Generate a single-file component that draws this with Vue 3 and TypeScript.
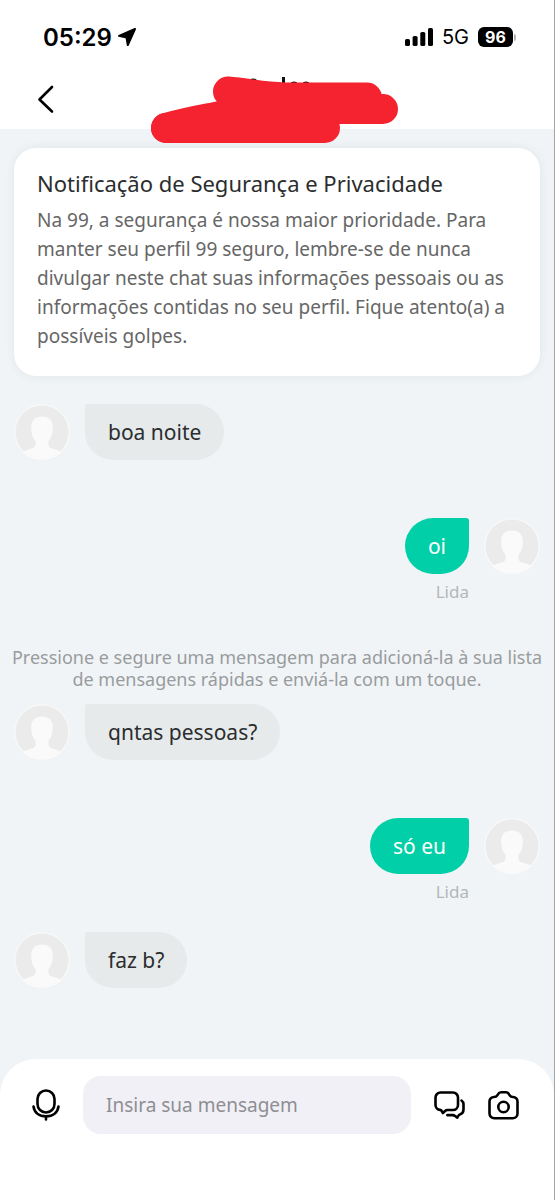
<script setup lang="ts">
import { ref } from 'vue'

interface ChatItem {
  id: number
  kind: 'received' | 'sent' | 'hint'
  text: string
  status?: string
}

const draft = ref('')

const items: ChatItem[] = [
  { id: 1, kind: 'received', text: 'boa noite' },
  { id: 2, kind: 'sent', text: 'oi', status: 'Lida' },
  {
    id: 3,
    kind: 'hint',
    text: 'Pressione e segure uma mensagem para adicioná-la à sua lista\nde mensagens rápidas e enviá-la com um toque.',
  },
  { id: 4, kind: 'received', text: 'qntas pessoas?' },
  { id: 5, kind: 'sent', text: 'só eu', status: 'Lida' },
  { id: 6, kind: 'received', text: 'faz b?' },
]

const notice =
  'Na 99, a segurança é nossa maior prioridade. Para\nmanter seu perfil 99 seguro, lembre-se de nunca\ndivulgar neste chat suas informações pessoais ou as\ninformações contidas no seu perfil. Fique atento(a) a\npossíveis golpes.'
</script>

<template>
  <div class="app">
    <header class="top">
      <div class="status-bar">
        <div class="clock">
          <span>05:29</span>
          <svg width="20" height="20" viewBox="0 0 20 20" aria-hidden="true">
            <path d="M18 2 2 8.800 9.500 10.500 10.800 18z" fill="#000" stroke="#000" stroke-width="2" stroke-linejoin="round" />
          </svg>
        </div>
        <div class="signals">
          <svg width="28" height="18" viewBox="0 0 28 18" aria-hidden="true">
            <rect x="0" y="11" width="5" height="7" rx="1.600" />
            <rect x="7.600" y="8" width="5" height="10" rx="1.600" />
            <rect x="15.300" y="4" width="5" height="14" rx="1.600" />
            <rect x="23" y="0" width="5" height="18" rx="1.600" />
          </svg>
          <span class="network">5G</span>
          <span class="battery">96</span>
          <span class="battery-cap"></span>
        </div>
      </div>
      <nav class="nav">
        <button class="icon-button" type="button" aria-label="Voltar">
          <svg width="18" height="30" viewBox="0 0 18 30" fill="none" stroke="#000" stroke-width="2.600" stroke-linecap="round" stroke-linejoin="round">
            <path d="M15 3 2.500 15.500 15 27.500" />
          </svg>
        </button>
      </nav>
      <svg class="scribble" width="248" height="68" viewBox="0 0 248 68" aria-hidden="true">
        <g fill="#111">
          <ellipse cx="103" cy="6.500" rx="4" ry="3" />
          <rect x="132" y="2" width="3" height="8" />
          <ellipse cx="144" cy="8" rx="3" ry="1.500" />
          <ellipse cx="156" cy="8" rx="3" ry="1.500" />
        </g>
        <g fill="none" stroke="#f5232f" stroke-width="30" stroke-linecap="round" stroke-linejoin="round">
          <path d="M78 16.500 C98 18 110 22 135 22.500 H217" />
          <path d="M233 34 H130 C100 34 75 40 60 43 C44 46 30 49 16 53" />
          <path d="M16 53 H175" />
          <path d="M80 40 H180" stroke-width="20" />
        </g>
      </svg>
    </header>

    <main class="chat">
      <section class="card">
        <h1>Notificação de Segurança e Privacidade</h1>
        <p>{{ notice }}</p>
      </section>

      <div class="list">
        <template v-for="item in items" :key="item.id">
          <p v-if="item.kind === 'hint'" class="hint">{{ item.text }}</p>
          <div v-else class="row" :class="item.kind">
            <svg class="avatar" width="56" height="56" viewBox="0 0 56 56" aria-hidden="true">
              <circle cx="28" cy="28" r="28" fill="#f7f8f8" />
              <circle cx="28" cy="28" r="26.500" fill="#ebebeb" />
              <path d="M28 12.500c-6.800 0-10.800 4-10.800 10.500 0 6.500 1.500 11 4.300 13.800v4.200c0 2.500-3 3.300-7 4.400-2.400.7-4.600 1.600-6 2.800A26.500 26.500 0 0 0 28 55.500a26.500 26.500 0 0 0 19.500-7.300c-1.400-1.200-3.600-2.100-6-2.800-4-1.100-7-1.900-7-4.400v-4.200c2.800-2.800 4.300-7.300 4.300-13.800 0-6.500-4-10.500-10.800-10.500z" fill="#fafafa" />
            </svg>
            <div class="message">
              <p class="bubble">{{ item.text }}</p>
              <span v-if="item.status" class="read">{{ item.status }}</span>
            </div>
          </div>
        </template>
      </div>
    </main>

    <footer class="composer">
      <button class="icon-button" type="button" aria-label="Gravar áudio">
        <svg width="28" height="32" viewBox="0 0 28 32" fill="none" stroke="#000" stroke-width="2.600" stroke-linecap="round">
          <rect x="5.500" y="1.500" width="17" height="22" rx="8.500" />
          <path d="M1.500 17.500c.8 6 5.700 9.800 12.500 9.800s11.700-3.800 12.500-9.800M14 28v2.500" />
        </svg>
      </button>
      <input v-model="draft" type="text" placeholder="Insira sua mensagem" aria-label="Insira sua mensagem" />
      <div class="actions">
        <button class="icon-button" type="button" aria-label="Mensagens rápidas">
          <svg width="31" height="30" viewBox="0 0 31 30" fill="none" stroke="#000" stroke-width="2.600" stroke-linecap="round" stroke-linejoin="round">
            <path d="M6.500 2.500h12.500a5 5 0 0 1 5 5v7.500a5 5 0 0 1-5 5h-5.500c-1 0-1.700.3-2.400 1l-2.200 2-1.300-2.200c-.4-.6-.8-.8-1.600-.9a5 5 0 0 1-4.500-4.900V7.500a5 5 0 0 1 5-5z" />
            <path d="M27.500 10.500c1.300.9 2 2 2 3.800v5.200c0 2.600-1.400 4.300-3.600 4.900-.8.200-1.100.5-1.400 1.100l-1.200 2.200-2.200-1.700c-.8-.6-1.400-.9-2.400-.9h-5.400" />
          </svg>
        </button>
        <button class="icon-button" type="button" aria-label="Câmera">
          <svg width="31" height="30" viewBox="0 0 31 30" fill="none" stroke="#000" stroke-width="2.600" stroke-linejoin="round">
            <path d="M6 7c1.700 0 2.600-.5 3.300-1.700l.6-1C10.800 2.700 11.800 2.200 13.200 2.200h4.600c1.400 0 2.400.5 3.300 2.100l.6 1C22.400 6.500 23.300 7 25 7a4.500 4.500 0 0 1 4.500 4.800V23.500a4.800 4.800 0 0 1-4.800 4.800H6.300a4.800 4.800 0 0 1-4.800-4.800V11.800A4.500 4.500 0 0 1 6 7z" />
            <circle cx="15.500" cy="17" r="5.200" />
          </svg>
        </button>
      </div>
    </footer>
  </div>
</template>

<style>
body {
  margin: 0;
  background: #fff;
}
</style>

<style scoped>
.app {
  box-sizing: border-box;
  min-height: 100vh;
  display: flex;
  flex-direction: column;
  border-right: 1px solid #a3a5a6;
  background: #f0f4f6;
  font-family: 'Noto Sans', 'Open Sans', sans-serif;
  color: #2b2d2e;
}

h1,
p {
  margin: 0;
  font-weight: 400;
}

.top {
  position: relative;
  background: #fff;
}

.status-bar {
  display: flex;
  align-items: center;
  justify-content: space-between;
  height: 74px;
  padding: 0 38px 0 43px;
  font-family: Inter, sans-serif;
  color: #000;
}

.clock {
  display: flex;
  align-items: center;
  gap: 5px;
  font-size: 24px;
  font-weight: 600;
}

.signals {
  display: flex;
  align-items: center;
}

.network {
  margin: 0 9px;
  font-size: 20px;
}

.battery {
  width: 35px;
  border-radius: 6px;
  background: #000;
  color: #fff;
  font-size: 16px;
  font-weight: 700;
  line-height: 20px;
  text-align: center;
}

.battery-cap {
  width: 2px;
  height: 7px;
  margin-left: 1px;
  border-radius: 0 2px 2px 0;
  background: #b5b5b5;
}

.nav {
  display: flex;
  height: 55px;
  padding: 0 37px;
  align-items: flex-start;
}

.nav .icon-button {
  padding-top: 10px;
}

.icon-button {
  display: flex;
  padding: 0;
  border: 0;
  background: none;
  cursor: pointer;
}

.scribble {
  position: absolute;
  left: 50%;
  top: 75px;
  margin-left: -127px;
  z-index: 1;
}

.chat {
  flex: 1;
  padding: 19px 14px 0;
}

.card {
  padding: 21px 23px 25px;
  border-radius: 22px;
  background: #fff;
  box-shadow: 0 0 10px rgba(40, 60, 70, 0.08);
}

.card h1 {
  font-size: 22px;
  line-height: 28px;
}

.card p {
  margin-top: 9px;
  color: #666;
  font-size: 19px;
  line-height: 29px;
  white-space: pre-line;
}

.list {
  display: flex;
  flex-direction: column;
  gap: 14px;
  padding-top: 28px;
}

.row {
  display: flex;
  align-items: flex-start;
  gap: 15px;
  min-height: 100px;
}

.sent {
  flex-direction: row-reverse;
}

.message {
  display: flex;
  flex-direction: column;
  align-items: flex-end;
}

.bubble {
  padding: 0 23px;
  border-radius: 3px 28px 28px 28px;
  background: #e6eaeb;
  font-size: 21px;
  line-height: 56px;
}

.sent .bubble {
  border-radius: 28px 3px 28px 28px;
  background: #01cfa7;
  color: #fff;
}

.read {
  margin-top: 6px;
  color: #b4b7b8;
  font-size: 17px;
  line-height: 24px;
}

.hint {
  margin: 14px -8px 0;
  color: #999c9e;
  font-size: 18px;
  line-height: 22px;
  text-align: center;
  white-space: pre-line;
}

.composer {
  box-sizing: border-box;
  display: flex;
  align-items: flex-start;
  gap: 23px;
  min-height: 141px;
  padding: 17px 35px 0 32px;
  border-radius: 36px 36px 0 0;
  background: #fff;
}

.composer .icon-button {
  height: 58px;
  align-items: center;
}

.composer input {
  box-sizing: border-box;
  flex: 1;
  min-width: 0;
  height: 58px;
  padding: 0 23px;
  border: 0;
  border-radius: 18px;
  outline: none;
  background: #f1f0f6;
  color: #2b2d2e;
  font: inherit;
  font-size: 19px;
}

.composer input::placeholder {
  color: #8e8e93;
  opacity: 1;
}

.actions {
  display: flex;
  gap: 23px;
}
</style>
